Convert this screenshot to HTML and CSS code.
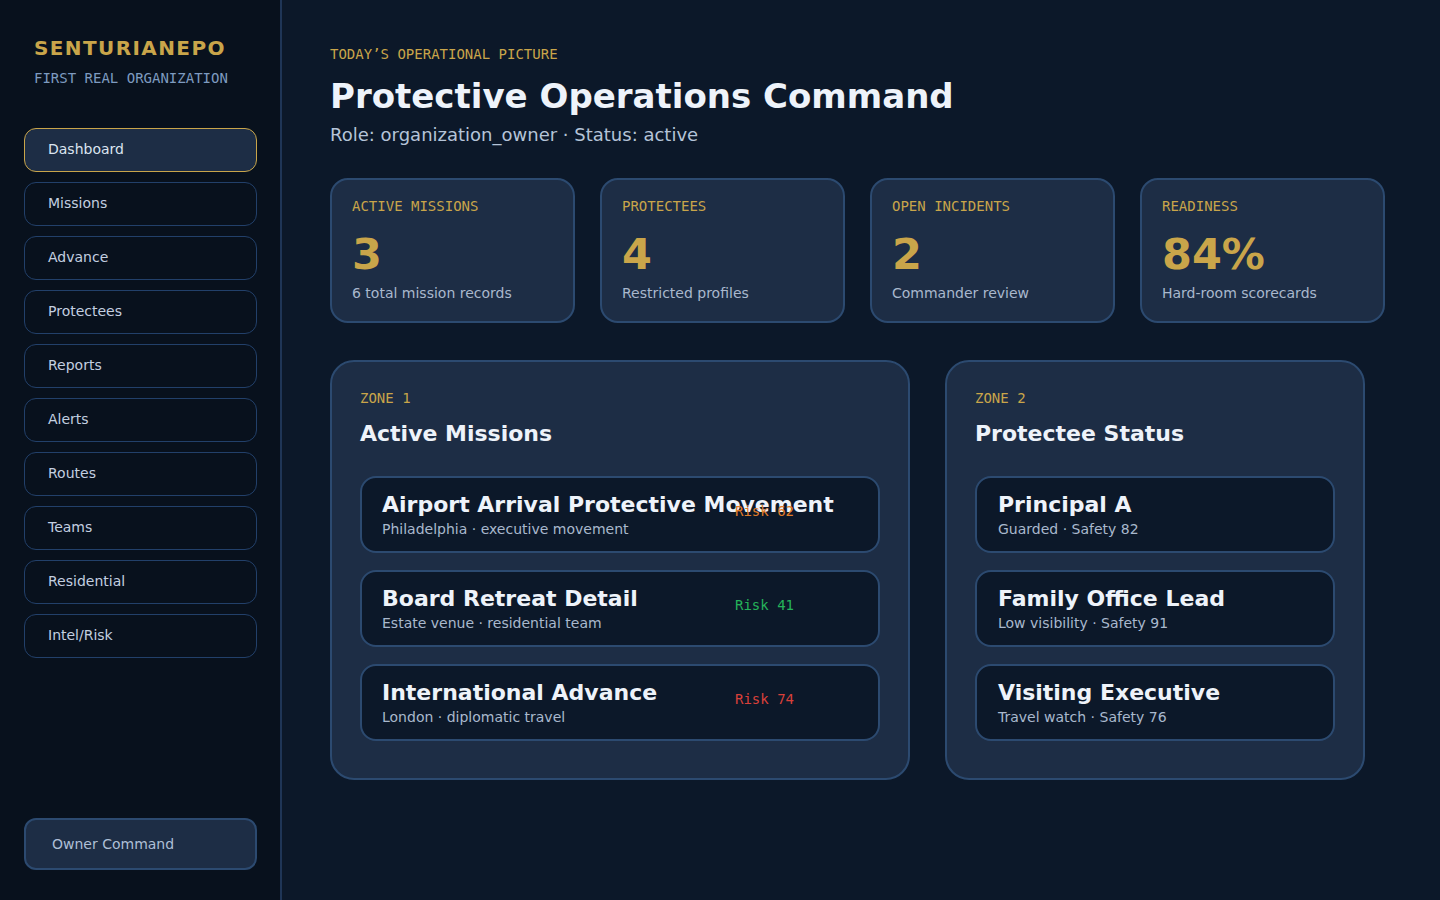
FILE: index.html
```html
<!DOCTYPE html>
<html lang="en">
<head>
<meta charset="utf-8">
<title>Protective Operations Command</title>
<link rel="stylesheet" href="styles.css">
</head>
<body>
<div class="app">
  <aside class="sidebar">
    <div class="brand">
      <div class="brand-name">SENTURIANEPO</div>
      <div class="brand-org">FIRST REAL ORGANIZATION</div>
    </div>
    <nav class="nav">
      <a class="nav-item active">Dashboard</a>
      <a class="nav-item">Missions</a>
      <a class="nav-item">Advance</a>
      <a class="nav-item">Protectees</a>
      <a class="nav-item">Reports</a>
      <a class="nav-item">Alerts</a>
      <a class="nav-item">Routes</a>
      <a class="nav-item">Teams</a>
      <a class="nav-item">Residential</a>
      <a class="nav-item">Intel/Risk</a>
    </nav>
    <button class="owner">Owner Command</button>
  </aside>
  <main class="main">
    <div class="eyebrow">TODAY’S OPERATIONAL PICTURE</div>
    <h1 class="title">Protective Operations Command</h1>
    <div class="role">Role: organization_owner · Status: active</div>

    <section class="stats">
      <div class="stat">
        <div class="stat-label">ACTIVE MISSIONS</div>
        <div class="stat-value">3</div>
        <div class="stat-desc">6 total mission records</div>
      </div>
      <div class="stat">
        <div class="stat-label">PROTECTEES</div>
        <div class="stat-value">4</div>
        <div class="stat-desc">Restricted profiles</div>
      </div>
      <div class="stat">
        <div class="stat-label">OPEN INCIDENTS</div>
        <div class="stat-value">2</div>
        <div class="stat-desc">Commander review</div>
      </div>
      <div class="stat">
        <div class="stat-label">READINESS</div>
        <div class="stat-value">84%</div>
        <div class="stat-desc">Hard-room scorecards</div>
      </div>
    </section>

    <section class="zones">
      <div class="zone">
        <div class="zone-label">ZONE 1</div>
        <h2 class="zone-title">Active Missions</h2>
        <div class="list">
          <div class="item mission">
            <div class="item-text">
              <div class="item-title">Airport Arrival Protective Movement</div>
              <div class="item-sub">Philadelphia · executive movement</div>
            </div>
            <div class="risk risk-med">Risk 62</div>
          </div>
          <div class="item mission">
            <div class="item-text">
              <div class="item-title">Board Retreat Detail</div>
              <div class="item-sub">Estate venue · residential team</div>
            </div>
            <div class="risk risk-low">Risk 41</div>
          </div>
          <div class="item mission">
            <div class="item-text">
              <div class="item-title">International Advance</div>
              <div class="item-sub">London · diplomatic travel</div>
            </div>
            <div class="risk risk-high">Risk 74</div>
          </div>
        </div>
      </div>
      <div class="zone zone-narrow">
        <div class="zone-label">ZONE 2</div>
        <h2 class="zone-title">Protectee Status</h2>
        <div class="list">
          <div class="item">
            <div class="item-text">
              <div class="item-title">Principal A</div>
              <div class="item-sub">Guarded · Safety 82</div>
            </div>
          </div>
          <div class="item">
            <div class="item-text">
              <div class="item-title">Family Office Lead</div>
              <div class="item-sub">Low visibility · Safety 91</div>
            </div>
          </div>
          <div class="item">
            <div class="item-text">
              <div class="item-title">Visiting Executive</div>
              <div class="item-sub">Travel watch · Safety 76</div>
            </div>
          </div>
        </div>
      </div>
    </section>
  </main>
</div>
</body>
</html>
```
FILE: styles.css
```css
* { box-sizing: border-box; }
html, body { margin: 0; padding: 0; }
body {
  background: #0c1829;
  font-family: "DejaVu Sans", "Liberation Sans", sans-serif;
  color: #eef3fa;
  width: 1440px;
  height: 900px;
  overflow: hidden;
}
.app {
  display: flex;
  height: 900px;
}
.sidebar {
  width: 282px;
  flex: none;
  background: #08111d;
  border-right: 2px solid #1f3556;
  padding: 36px 23px 30px 24px;
  display: flex;
  flex-direction: column;
}
.brand { padding-left: 10px; }
.brand-name {
  font-size: 20px;
  line-height: 24px;
  font-weight: bold;
  color: #c9a54a;
  letter-spacing: 0.07em;
}
.brand-org {
  margin-top: 10px;
  font-family: "DejaVu Sans Mono", monospace;
  font-size: 14px;
  line-height: 17px;
  color: #7e9bc0;
}
.nav {
  margin-top: 41px;
  display: flex;
  flex-direction: column;
  gap: 10px;
}
.nav-item {
  height: 44px;
  display: flex;
  align-items: center;
  padding: 0 0 2px 23px;
  border: 1px solid #22406a;
  border-radius: 12px;
  font-size: 14px;
  color: #c3cfe0;
}
.nav-item.active {
  background: #1d2d45;
  border-color: #c9a54a;
  color: #dbe4f0;
}
.owner {
  margin-top: auto;
  height: 52px;
  width: 100%;
  text-align: left;
  padding: 0 0 0 26px;
  background: #1d2d45;
  border: 2px solid #2c4a70;
  border-radius: 12px;
  font-family: "DejaVu Sans", sans-serif;
  font-size: 14px;
  color: #aebfd6;
}
.main {
  flex: 1;
  padding: 46px 48px 0 48px;
}
.eyebrow {
  font-family: "DejaVu Sans Mono", monospace;
  font-size: 14px;
  line-height: 17px;
  color: #c9a54a;
}
.title {
  margin: 13px 0 0;
  font-size: 34px;
  line-height: 40px;
  font-weight: bold;
  color: #eef3fa;
}
.role {
  margin-top: 8px;
  font-size: 18px;
  line-height: 22px;
  color: #b5c4d8;
}
.stats {
  margin-top: 32px;
  display: grid;
  grid-template-columns: repeat(4, 245px);
  gap: 25px;
}
.stat {
  background: #1d2d45;
  border: 2px solid #2c4a70;
  border-radius: 18px;
  padding: 18px 20px 19px;
}
.stat-label, .zone-label {
  font-family: "DejaVu Sans Mono", monospace;
  font-size: 14px;
  line-height: 17px;
  color: #c9a54a;
}
.stat-value {
  margin-top: 15px;
  font-size: 43px;
  line-height: 48px;
  font-weight: bold;
  color: #c9a54a;
}
.stat-desc {
  margin-top: 7px;
  font-size: 14px;
  line-height: 17px;
  color: #a9b8cd;
}
.zones {
  margin-top: 37px;
  display: grid;
  grid-template-columns: 580px 420px;
  gap: 35px;
  align-items: start;
}
.zone {
  background: #1d2d45;
  border: 2px solid #2c4a70;
  border-radius: 24px;
  padding: 28px 28px 37px;
}
.zone-title {
  margin: 14px 0 0;
  font-size: 22px;
  line-height: 26px;
  font-weight: bold;
  color: #eef3fa;
}
.list {
  margin-top: 29px;
  display: flex;
  flex-direction: column;
  gap: 17px;
}
.item {
  background: #0c1829;
  border: 2px solid #2c4a70;
  border-radius: 16px;
  padding: 14px 20px 13px;
  display: grid;
  grid-template-columns: minmax(0, 1fr);
}
.zone-narrow .item { padding-left: 21px; }
.item.mission {
  grid-template-columns: minmax(0, 1fr) 123px;
}
.item-text { min-width: 0; }
.item-title {
  font-size: 22px;
  line-height: 26px;
  font-weight: bold;
  color: #eef3fa;
  white-space: nowrap;
}
.item-sub {
  margin-top: 3px;
  font-size: 14px;
  line-height: 17px;
  color: #a9b8cd;
}
.risk {
  margin-top: 11px;
  font-family: "DejaVu Sans Mono", monospace;
  font-size: 14px;
  line-height: 17px;
  position: relative;
}
.risk-med { color: #e07d2a; }
.risk-low { color: #25b25a; }
.risk-high { color: #d8403a; }
```
